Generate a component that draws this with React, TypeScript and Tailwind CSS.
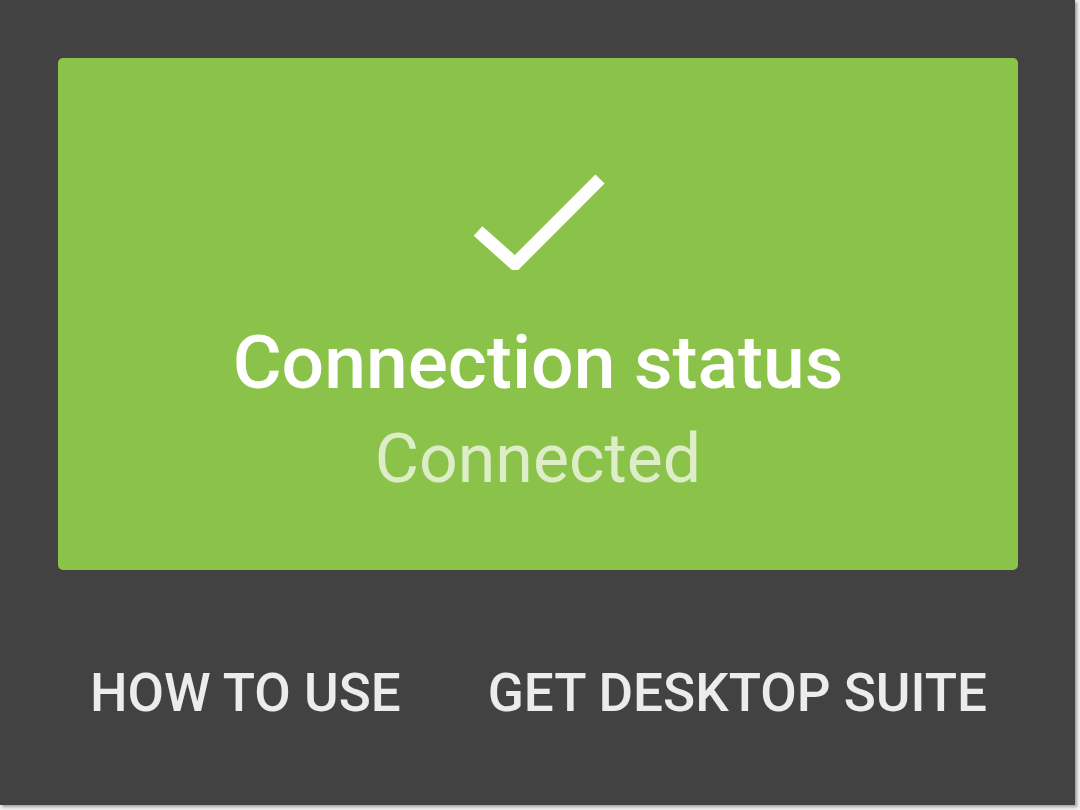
import React from 'react';

const CheckIcon = () => (
  <svg width="140" height="100" viewBox="0 0 140 100" fill="none">
    <path d="M10 61 L47 94 L132 9" stroke="white" strokeWidth="13" strokeLinejoin="miter" />
  </svg>
);

export default function App() {
  return (
    <div className="h-[810px] w-[1080px] bg-[#f2f2f2] font-['Roboto',sans-serif]">
      <div className="flex h-[805px] w-[1075px] flex-col bg-[#424242] px-[58px] pt-[58px] shadow-[2px_2px_3px_rgba(0,0,0,0.35)]">
        {/* status card */}
        <div className="flex h-[512px] w-[960px] flex-col items-center rounded-[5px] bg-[#8bc34a] pt-[112px]">
          <CheckIcon />
          <div className="mt-[55px] text-[75px] leading-none font-medium text-white">
            Connection status
          </div>
          <div className="mt-[25px] text-[68px] leading-none text-[#dcedc8]">
            Connected
          </div>
        </div>

        {/* actions */}
        <div className="mt-[97px] flex w-[960px] justify-between pl-[32px] pr-[31px]">
          <button className="text-[53px] leading-none font-medium text-[#ececec]">HOW TO USE</button>
          <button className="text-[53px] leading-none font-medium text-[#ececec]">GET DESKTOP SUITE</button>
        </div>
      </div>
    </div>
  );
}
